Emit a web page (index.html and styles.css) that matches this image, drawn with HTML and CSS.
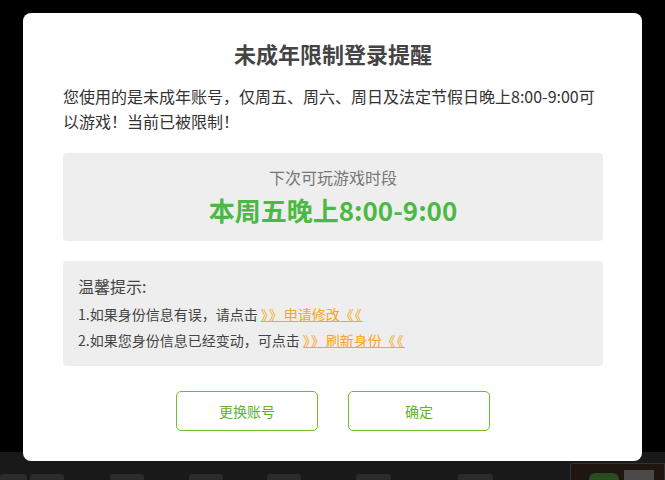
FILE: index.html
```html
<!DOCTYPE html>
<html lang="zh-CN">
<head>
<meta charset="utf-8">
<link rel="stylesheet" href="styles.css">
</head>
<body>
<div class="desk">
  <div class="top"></div>
  <div class="bar">
    <div class="tabs">
      <span class="tab t1"></span><span class="tab t2"></span><span class="tab t3"></span><span class="tab t4"></span><span class="tab t5"></span><span class="tab t6"></span><span class="tab t7"></span>
    </div>
    <div class="thumb"><span class="pill"></span><span class="sq"></span></div>
  </div>
</div>
<div class="dialog">
  <h1 class="title">未成年限制登录提醒</h1>
  <p class="desc">您使用的是未成年账号，仅周五、周六、周日及法定节假日晚上8:00-9:00可以游戏！当前已被限制！</p>
  <div class="panel next">
    <div class="next-label">下次可玩游戏时段</div>
    <div class="next-time">本周五晚上8:00-9:00</div>
  </div>
  <div class="panel tips">
    <div class="tips-title">温馨提示:</div>
    <div class="tip tip-first">1.如果身份信息有误，请点击 <a class="link"><span class="ang">》》</span>申请修改<span class="ang">《《</span></a></div>
    <div class="tip">2.如果您身份信息已经变动，可点击 <a class="link"><span class="ang">》》</span>刷新身份<span class="ang">《《</span></a></div>
  </div>
  <div class="actions">
    <button class="btn">更换账号</button>
    <button class="btn">确定</button>
  </div>
</div>
</body>
</html>
```
FILE: styles.css
```css
html, body { margin: 0; padding: 0; }
body {
  width: 665px; height: 480px; overflow: hidden;
  background: #000;
  font-family: "Noto Sans CJK SC", "Noto Sans", sans-serif;
  position: relative;
}
.desk { display: flex; flex-direction: column; height: 480px; }
.top { height: 452px; background: #000; }
.bar { flex: 1; background: #191919; display: flex; justify-content: space-between; align-items: flex-end; }
.tabs { display: flex; height: 6px; align-items: flex-end; }
.tab { height: 6px; background: #2b2b2b; border-radius: 3px 3px 0 0; display: block; }
.t1 { width: 27px; margin-left: 0; }
.t2 { width: 34px; margin-left: 3px; }
.t3 { width: 34px; margin-left: 46px; }
.t4 { width: 34px; margin-left: 45px; }
.t5 { width: 34px; margin-left: 44px; }
.t6 { width: 35px; margin-left: 55px; }
.t7 { width: 35px; margin-left: 67px; }
.thumb { width: 95px; height: 17px; background: #1e1410; border: 1px solid #333; border-bottom: none; border-radius: 3px 0 0 0; display: flex; align-items: flex-end; padding-left: 18px; box-sizing: border-box; gap: 5px; }
.pill { width: 30px; height: 7px; background: #2a4a22; border-radius: 6px 6px 0 0; }
.sq { width: 30px; height: 10px; background: #4a4a4a; }

.dialog {
  position: absolute; left: 23px; top: 13px;
  width: 619px; height: 448px;
  background: #fff; border-radius: 8px;
  box-sizing: border-box; padding: 24px 39px 0 40px;
  display: flex; flex-direction: column;
}
.title { margin: 0; text-align: center; font-size: 22px; line-height: 32px; font-weight: bold; color: #444; }
.desc { margin: 15px 0 0 0; font-size: 16px; line-height: 25px; color: #333; }
.panel { background: #eee; border-radius: 4px; }
.next { margin-top: 19px; height: 88px; box-sizing: border-box; padding-top: 13px; text-align: center; }
.next-label { font-size: 16px; line-height: 22px; color: #777; }
.next-time { font-size: 26px; line-height: 36px; font-weight: bold; color: #4cb944; margin-top: 4px; }
.tips { margin-top: 20px; height: 105px; box-sizing: border-box; padding: 14px 15px 0 15px; }
.tips-title { font-size: 16px; line-height: 22px; color: #444; }
.tip { font-size: 14px; line-height: 26px; color: #444; }
.tip-first { margin-top: 4px; }
.link { color: #f5a623; text-decoration: underline; }
.ang { letter-spacing: 1px; }
.actions { display: flex; justify-content: center; gap: 30px; margin-top: 25px; }
.btn {
  width: 142px; height: 40px; background: #fff;
  border: 1px solid #6ebd2f; border-radius: 5px;
  color: #5eb42b; font-size: 14px; font-family: inherit; padding: 0;
}
```
